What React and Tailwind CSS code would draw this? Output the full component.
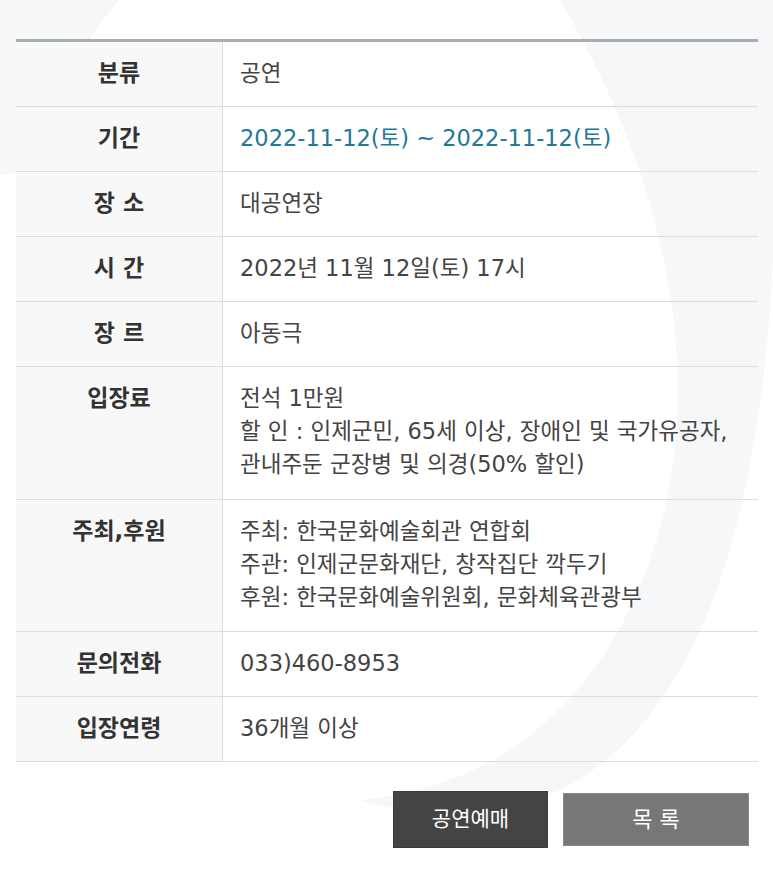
const rows = [
  { label: '분류', lines: ['공연'] },
  { label: '기간', lines: ['2022-11-12(토) ~ 2022-11-12(토)'], blue: true },
  { label: '장 소', lines: ['대공연장'] },
  { label: '시 간', lines: ['2022년 11월 12일(토) 17시'] },
  { label: '장 르', lines: ['아동극'] },
  {
    label: '입장료',
    lines: ['전석 1만원', '할 인 : 인제군민, 65세 이상, 장애인 및 국가유공자,', '관내주둔 군장병 및 의경(50% 할인)'],
  },
  {
    label: '주최,후원',
    lines: ['주최: 한국문화예술회관 연합회', '주관: 인제군문화재단, 창작집단 깍두기', '후원: 한국문화예술위원회, 문화체육관광부'],
  },
  { label: '문의전화', lines: ['033)460-8953'] },
  { label: '입장연령', lines: ['36개월 이상'] },
];

function Watermark() {
  return (
    <svg className="absolute inset-0 w-full h-full pointer-events-none" viewBox="0 0 773 887" preserveAspectRatio="none">
      <path d="M0 0 L120 0 C80 40 60 100 40 170 L0 175 Z" fill="#f6f7f8" />
      <path
        d="M560 0 L773 0 L773 260 C760 520 700 720 560 790 C500 815 420 820 360 800 C470 790 590 730 650 560 C700 420 690 220 560 0 Z"
        fill="#f6f7f8"
      />
    </svg>
  );
}

export default function App() {
  return (
    <div className="relative w-[773px] h-[887px] bg-white overflow-hidden" style={{ fontFamily: '"DejaVu Sans", "Noto Sans CJK KR", sans-serif' }}>
      <Watermark />
      <div className="relative pt-[39px] px-[16px] pr-[15px]">
        <div className="border-t-[3px] border-[#a9adb1]">
          {rows.map((r) => {
            const multi = r.lines.length > 1;
            return (
              <div key={r.label} className="flex border-b border-[#dcdcdc]">
                <div className={`w-[207px] shrink-0 bg-[#f7f7f7]/90 border-r border-[#dcdcdc] pt-[15px] text-center text-[23px] leading-[33px] font-bold text-[#333] ${multi ? 'pb-[17.5px]' : 'pb-4'}`}>
                  {r.label}
                </div>
                <div className={`flex-1 pl-[17px] pt-[15px] text-[22.5px] leading-[33px] ${multi ? 'pb-[17.5px]' : 'pb-4'} ${r.blue ? 'text-[#22789a]' : 'text-[#444]'}`}>
                  {r.lines.map((l) => (
                    <div key={l}>{l}</div>
                  ))}
                </div>
              </div>
            );
          })}
        </div>
        <div className="flex justify-end gap-[15px] mt-[29px] pr-[9px]">
          <button className="w-[155px] h-[57px] bg-[#444] text-white text-[21px] border border-[#3a3a3a]">공연예매</button>
          <button className="w-[186px] h-[53px] mt-[2px] bg-[#777] text-white text-[22px] border border-[#888]">목 록</button>
        </div>
      </div>
    </div>
  );
}
